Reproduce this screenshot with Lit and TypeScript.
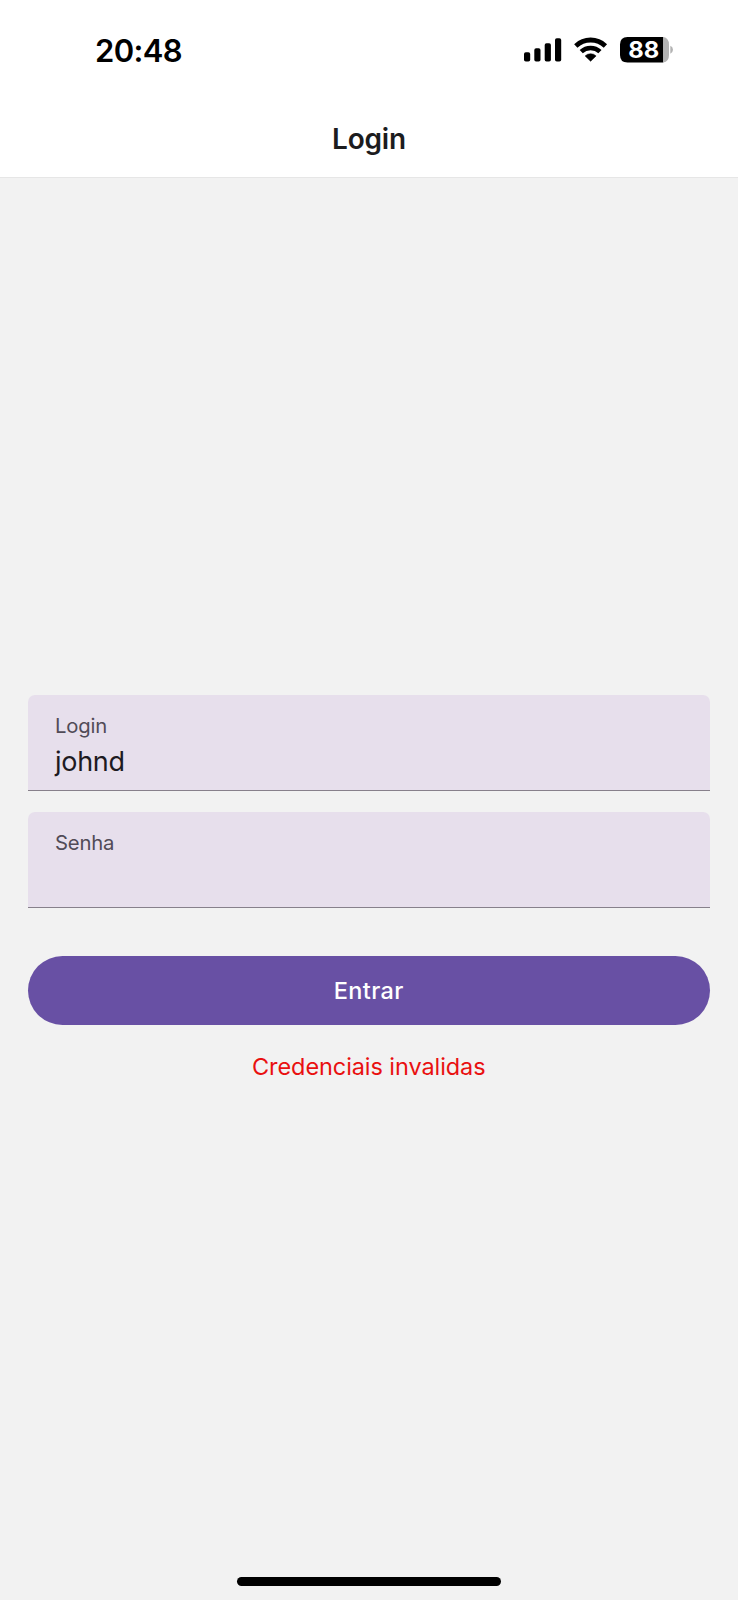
import { LitElement, html, css, svg } from "lit";
import { customElement, property } from "lit/decorators.js";

@customElement("status-bar")
class StatusBar extends LitElement {
  static styles = css`
    :host { display: flex; justify-content: space-between; align-items: center; height: 100px; padding: 0 64px 0 95px; box-sizing: border-box; color: #000; }
    .time { font-size: 31px; font-weight: 600; line-height: 40px; letter-spacing: -0.65px; padding-top: 2px; }
    .icons { display: block; width: 152px; height: 30px; }
    .level { font-size: 23px; font-weight: 700; fill: #fff; }
  `;
  render() {
    return html`
      <span class="time">20:48</span>
      <svg class="icons" viewBox="0 0 152 30">
        ${[[2, 17.3], [12.3, 13.3], [22.7, 8.3], [33, 3.2]].map(([x, y]) => svg`<rect x=${x} y=${y} width="6.2" height=${26.5 - y} rx="1.8"/>`)}
        <path d="M53.8 10.9A21.5 21.5 0 0 1 83.4 10.9" fill="none" stroke="#000" stroke-width="4.8"/>
        <path d="M59.25 16.65A13.6 13.6 0 0 1 77.95 16.65" fill="none" stroke="#000" stroke-width="4.6"/>
        <path d="M63.1 20.9A8 8 0 0 1 74.1 20.9L68.6 26.3Z" stroke="#000" stroke-width=".5" stroke-linejoin="round"/>
        <path d="M105.5 2H141.3V27.5H105.5Q98 27.5 98 20V9.5Q98 2 105.5 2Z"/>
        <path d="M141.3 2Q147 3 147 9.5V20Q147 26.5 141.3 27.5Z" fill="#b3b3b3"/>
        <path d="M148.3 10.8Q151 12 151 14.7T148.3 18.7Z" fill="#b3b3b3"/>
        <text class="level" x="121.7" y="23.2" text-anchor="middle" textLength="31" lengthAdjust="spacingAndGlyphs">88</text>
      </svg>`;
  }
}

@customElement("text-field")
class TextField extends LitElement {
  @property() label = "";
  @property() value = "";
  static styles = css`
    :host { display: block; box-sizing: border-box; height: 96px; padding: 19px 28px 0 27.5px; border-radius: 7px 7px 0 0; background: #e7dfec; border-bottom: 1px solid #87808b; }
    .label { font-size: 20.3px; line-height: 24px; letter-spacing: -0.2px; color: #514b57; }
    .value { font-size: 27px; line-height: 34px; letter-spacing: -0.3px; margin-top: 7px; color: #1d1a22; }
  `;
  render() {
    return html`<div class="label">${this.label}</div><div class="value">${this.value}</div>`;
  }
}

@customElement("app-root")
class AppRoot extends LitElement {
  static styles = css`
    :host { display: flex; flex-direction: column; height: 1600px; background: #f2f2f2; font-family: Inter, "Liberation Sans", sans-serif; }
    .header { height: 178px; background: #fff; border-bottom: 1px solid #e6e6e6; box-sizing: border-box; }
    .title { font-size: 28px; line-height: 40px; font-weight: 600; text-align: center; color: #1c1c1e; padding-top: 19px; letter-spacing: -0.2px; }
    .form { flex: 1; display: flex; flex-direction: column; padding: 517px 28px 0 27.5px; }
    .second { margin-top: 21px; }
    .button { margin-top: 48px; height: 69px; border: 0; padding: 0; border-radius: 35px; background: #6850a4; color: #fff; font: 500 23.5px/69px Inter, sans-serif; letter-spacing: 0.35px; }
    .error { margin-top: 26px; text-align: center; color: #e91010; font-size: 23.5px; line-height: 32px; letter-spacing: -0.08px; }
    .home { align-self: center; width: 264px; height: 9px; border-radius: 5px; background: #000; margin-bottom: 14px; }
  `;
  render() {
    return html`
      <div class="header">
        <status-bar></status-bar>
        <div class="title">Login</div>
      </div>
      <div class="form">
        <text-field label="Login" value="johnd"></text-field>
        <text-field class="second" label="Senha"></text-field>
        <button class="button">Entrar</button>
        <div class="error">Credenciais invalidas</div>
      </div>
      <div class="home"></div>`;
  }
}
